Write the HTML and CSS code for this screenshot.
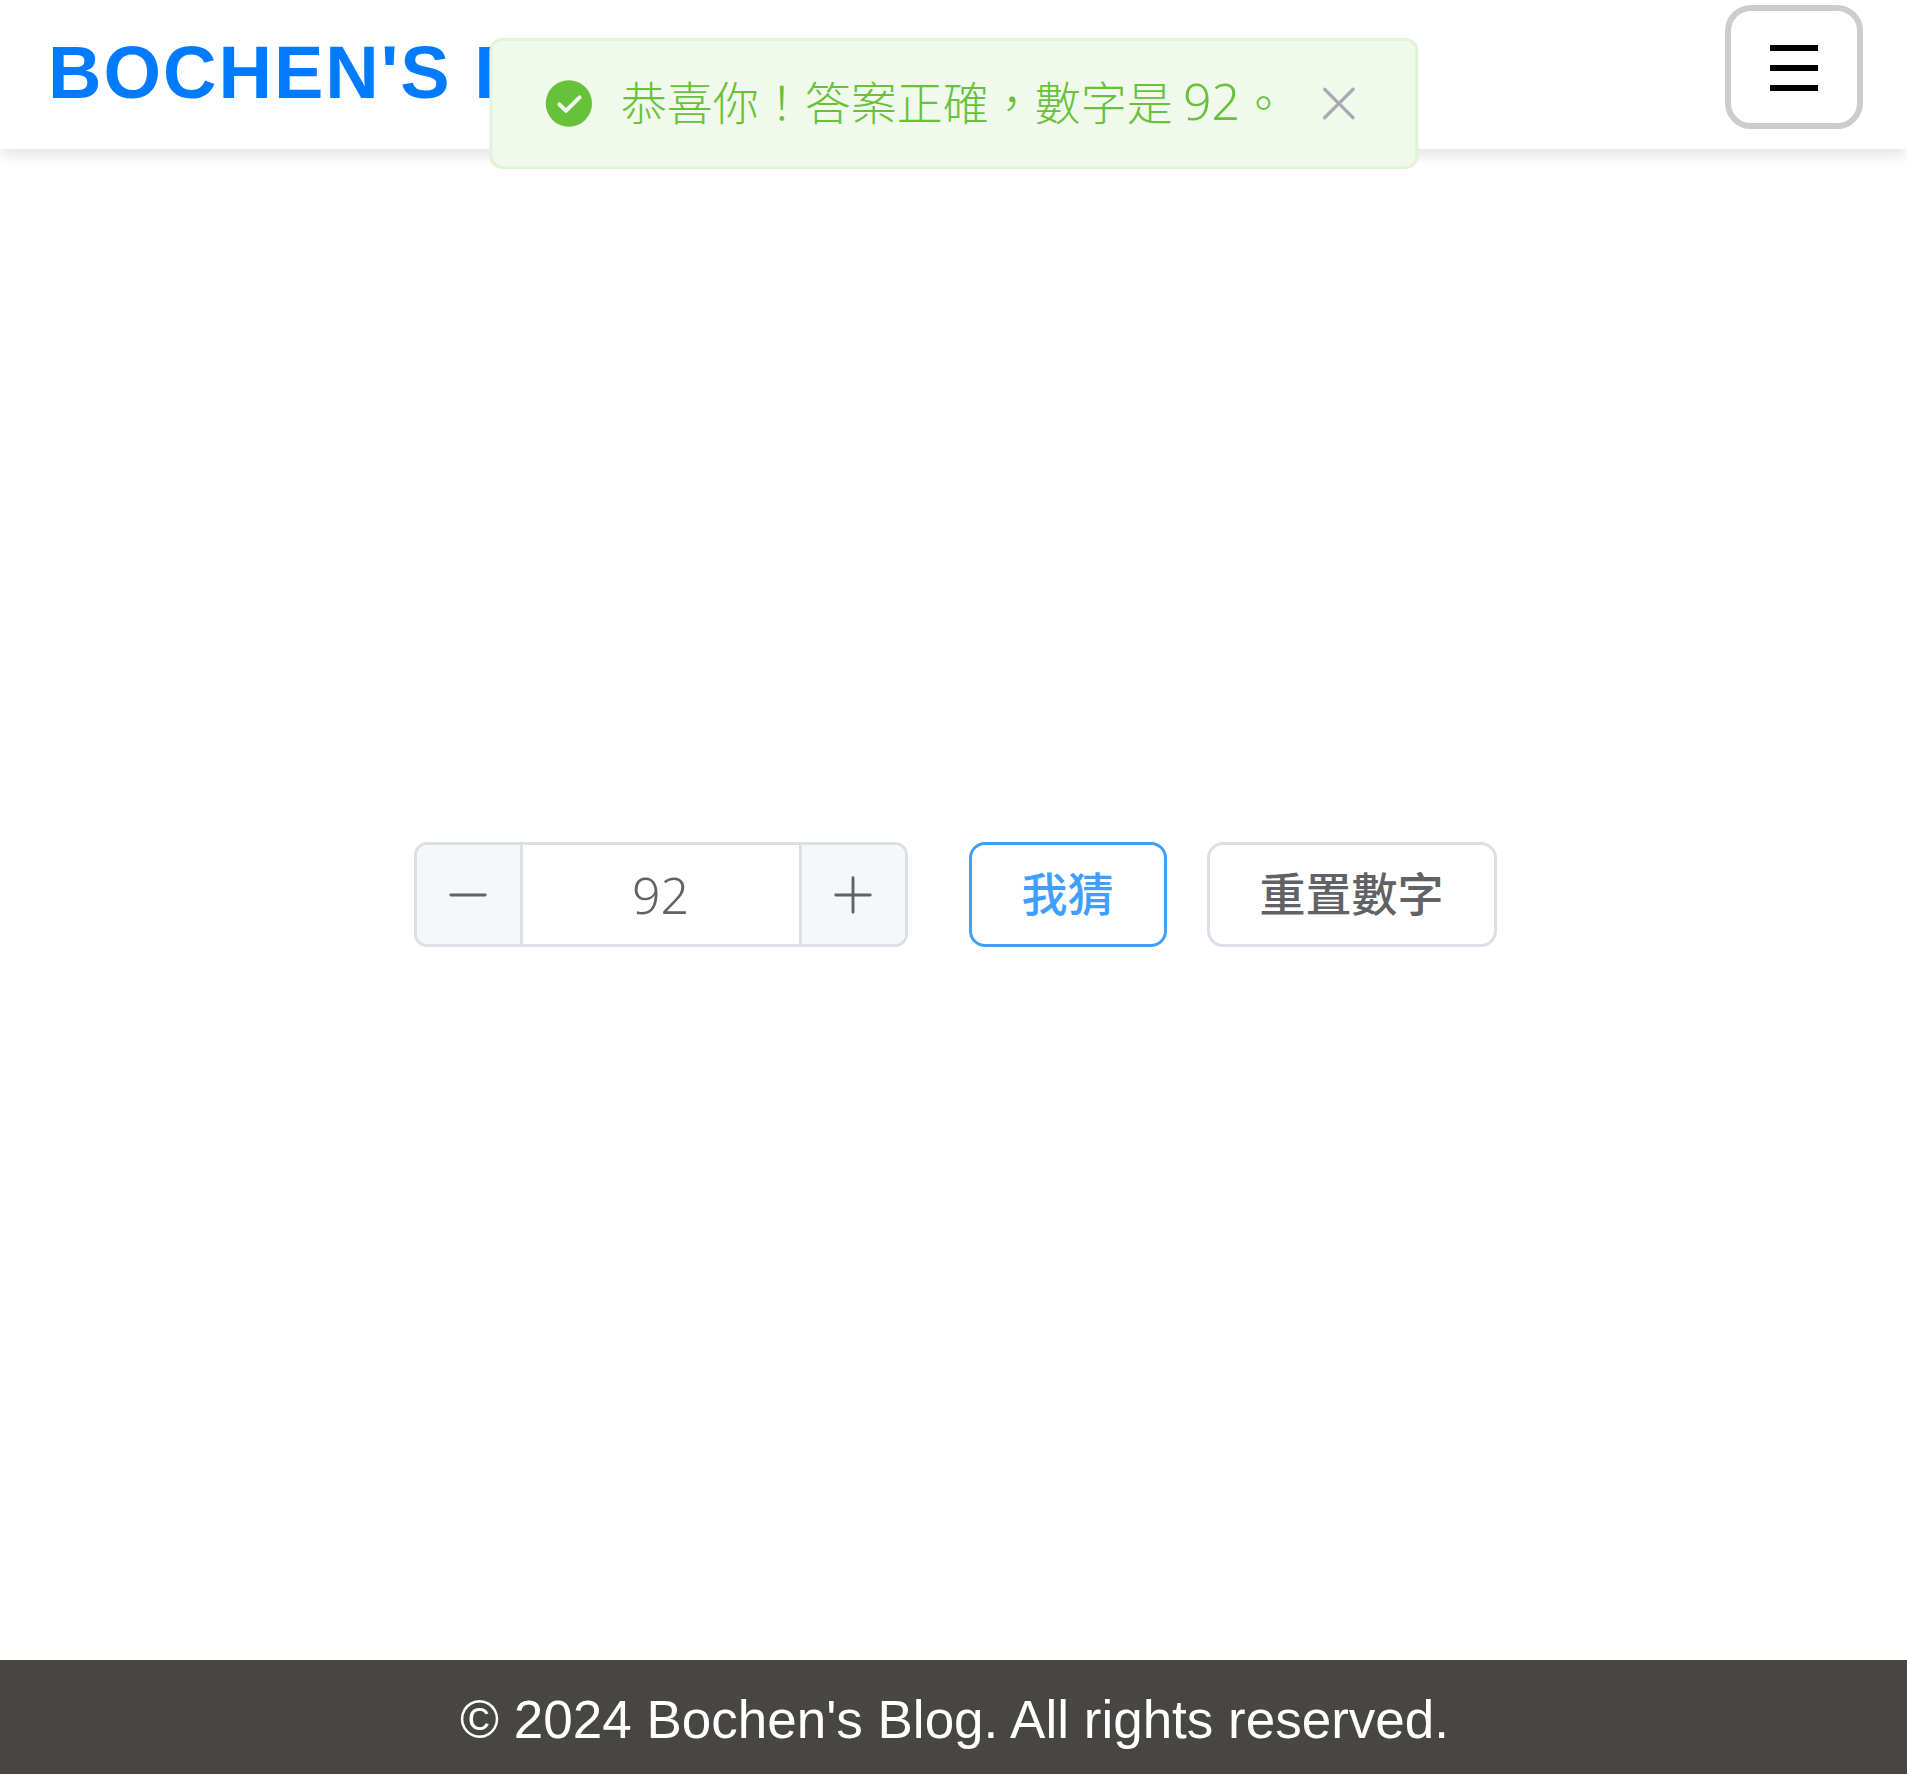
FILE: index.html
```html
<!DOCTYPE html>
<html lang="zh-Hant">
<head>
  <meta charset="utf-8">
  <meta name="viewport" content="width=device-width, initial-scale=1">
  <title>Bochen's Blog</title>
  <link rel="stylesheet" href="styles.css">
</head>
<body>
  <header class="site-header">
    <a class="logo" href="#">BOCHEN'S BLOG</a>
    <button class="menu-button" type="button" aria-label="Menu">
      <svg class="menu-icon" viewBox="0 0 48 46" aria-hidden="true">
        <path d="M0 3h48M0 23h48M0 43h48" stroke="currentColor" stroke-width="6"/>
      </svg>
    </button>
  </header>

  <div class="message" role="alert">
    <svg class="message-icon" viewBox="0 0 1024 1024" aria-hidden="true">
      <path fill="currentColor" d="M512 64a448 448 0 1 1 0 896 448 448 0 0 1 0-896m-55.808 536.384-99.52-99.584a38.4 38.4 0 1 0-54.336 54.336l126.72 126.72a38.27 38.27 0 0 0 54.336 0l262.4-262.464a38.4 38.4 0 1 0-54.272-54.336z"/>
    </svg>
    <p class="message-text">恭喜你！答案正確，數字是 <span class="number">92</span>。</p>
    <button class="message-close" type="button" aria-label="關閉">
      <svg class="close-icon" viewBox="0 0 1024 1024" aria-hidden="true">
        <path fill="currentColor" d="M764.288 214.592 512 466.88 259.712 214.592a31.936 31.936 0 0 0-45.12 45.12L466.752 512 214.528 764.224a31.936 31.936 0 1 0 45.12 45.184L512 557.184l252.288 252.288a31.936 31.936 0 0 0 45.12-45.12L557.12 512.064l252.288-252.352a31.936 31.936 0 1 0-45.12-45.184z"/>
      </svg>
    </button>
  </div>

  <main class="game">
    <div class="stepper">
      <button class="step" type="button" aria-label="減少">
        <svg class="step-icon" viewBox="0 0 1024 1024" aria-hidden="true">
          <path fill="currentColor" d="M128 544h768a32 32 0 1 0 0-64H128a32 32 0 0 0 0 64"/>
        </svg>
      </button>
      <input class="guess-input number" type="text" inputmode="numeric" value="92" aria-label="數字">
      <button class="step" type="button" aria-label="增加">
        <svg class="step-icon" viewBox="0 0 1024 1024" aria-hidden="true">
          <path fill="currentColor" d="M480 480V128a32 32 0 0 1 64 0v352h352a32 32 0 1 1 0 64H544v352a32 32 0 1 1-64 0V544H128a32 32 0 0 1 0-64z"/>
        </svg>
      </button>
    </div>
    <div class="actions">
      <button class="button button-primary" type="button">我猜</button>
      <button class="button" type="button">重置數字</button>
    </div>
  </main>

  <footer class="site-footer">© 2024 Bochen's Blog. All rights reserved.</footer>
</body>
</html>
```

FILE: styles.css
```css
* {
  box-sizing: border-box;
}

body {
  display: flex;
  flex-direction: column;
  min-height: 100vh;
  margin: 0;
  background: #fff;
  font-family: "Liberation Sans", "Noto Sans CJK TC", sans-serif;
}

button {
  padding: 0;
  border: 0;
  background: none;
  font: inherit;
  cursor: pointer;
}

svg {
  display: block;
}

.site-header {
  display: flex;
  align-items: flex-end;
  justify-content: space-between;
  padding: 5px 44px 20px 48px;
  background: #fff;
  box-shadow: 0 7px 13px rgba(0, 0, 0, 0.1);
}

.logo {
  color: #007bff;
  font-size: 74px;
  font-weight: 700;
  line-height: 112px;
  letter-spacing: 2px;
  text-decoration: none;
  white-space: nowrap;
}

.menu-button {
  display: flex;
  align-items: center;
  justify-content: center;
  width: 138px;
  height: 124px;
  padding-top: 2px;
  border: 6px solid #ccc;
  border-radius: 26px;
  color: #000;
}

.menu-icon {
  width: 48px;
  height: 46px;
}

.message {
  position: absolute;
  top: 38px;
  left: 50%;
  display: flex;
  align-items: center;
  gap: 26px;
  padding: 36px 50px;
  border: 3px solid #e1f3d8;
  border-radius: 13px;
  background: #f0f9eb;
  color: #67c23a;
  transform: translateX(-50%);
}

.message-icon,
.close-icon {
  width: 53px;
  height: 53px;
}

.message-text {
  margin: 0;
  padding-bottom: 7px;
  font-family: "Noto Sans CJK TC", sans-serif;
  font-size: 46px;
  font-weight: 300;
  line-height: 44px;
  white-space: nowrap;
}

.message-close {
  color: #a8abb2;
}

.number {
  font-family: "Noto Sans", "Open Sans", sans-serif;
  font-size: 50px;
  font-weight: 350;
}

.game {
  display: flex;
  flex: 1;
  align-items: center;
  justify-content: center;
  gap: 61px;
  padding: 0 0 20px 3px;
}

.stepper {
  display: flex;
  width: 494px;
  height: 105px;
  overflow: hidden;
  border: 3px solid #dcdfe6;
  border-radius: 13px;
}

.step {
  display: flex;
  flex: 0 0 103px;
  align-items: center;
  justify-content: center;
  background: #f5f7fa;
  color: #606266;
}

.step-icon {
  width: 46px;
  height: 46px;
}

.guess-input {
  flex: 1;
  min-width: 0;
  padding: 0;
  border: solid #dcdfe6;
  border-width: 0 3px;
  background: #fff;
  color: #606266;
  text-align: center;
}

.actions {
  display: flex;
  gap: 40px;
}

.button {
  height: 105px;
  padding: 0 50px 7px;
  border: 3px solid #dcdfe6;
  border-radius: 16px;
  background: #fff;
  color: #606266;
  font-family: "Noto Sans CJK TC", sans-serif;
  font-size: 46px;
  font-weight: 500;
  line-height: 46px;
  white-space: nowrap;
}

.button-primary {
  border-color: #409eff;
  color: #409eff;
}

.site-footer {
  padding: 29px 0 24px 2px;
  background: #474643;
  color: #fff;
  font-size: 53px;
  line-height: 61px;
  text-align: center;
}
```
